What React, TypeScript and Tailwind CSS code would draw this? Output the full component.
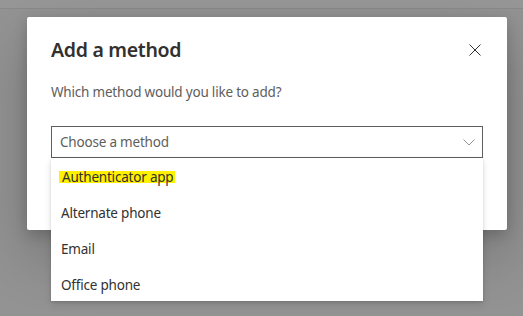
import React from "react";

const METHODS = ["Authenticator app", "Alternate phone", "Email", "Office phone"];

export default function App() {
  return (
    <div
      className="relative h-[316px] w-[523px] overflow-hidden bg-[#939393]"
      style={{ fontFamily: '"Noto Sans", "Open Sans", sans-serif' }}
    >
      {/* page header behind the overlay */}
      <div className="h-[9px] border-b border-[#8a8a8a] bg-[#979797]" />

      {/* Dialog */}
      <div className="ml-[27px] mt-[8px] w-[480px] rounded-[2px] bg-white px-6 pb-[72px] pt-[19px] shadow-[0_25px_58px_rgba(0,0,0,0.22),0_5px_14px_rgba(0,0,0,0.18)]">
        <div className="flex items-center justify-between">
          <h1 className="text-[19.5px] font-semibold leading-[28px] tracking-[-0.3px] text-[#323130]">Add a method</h1>
          <button aria-label="Close" className="mr-[2px] flex h-3 w-3 items-center justify-center">
            <svg width="12" height="12" viewBox="0 0 12 12" fill="none">
              <path d="M0.5 0.5 L11.5 11.5 M11.5 0.5 L0.5 11.5" stroke="#323130" strokeWidth="1" />
            </svg>
          </button>
        </div>

        <p className="mt-[18px] text-[13.5px] leading-5 tracking-[-0.2px] text-[#605e5c]">
          Which method would you like to add?
        </p>

        {/* Select */}
        <div className="relative mt-6">
          <div className="flex h-8 items-center justify-between border border-[#605e5c] pl-2 pr-[7px]">
            <span className="text-[13.5px] tracking-[-0.2px] text-[#605e5c]">Choose a method</span>
            <svg width="12" height="7" viewBox="0 0 12 7" fill="none">
              <path d="M0.5 0.5 L6 6 L11.5 0.5" stroke="#979593" strokeWidth="1" />
            </svg>
          </div>

          {/* Dropdown list */}
          <ul className="absolute left-0 top-full h-[143px] w-full overflow-hidden bg-white pt-px shadow-[0_3px_7px_rgba(0,0,0,0.13),0_1px_2px_rgba(0,0,0,0.11)]">
            {METHODS.map((m, i) => (
              <li
                key={m}
                className="flex h-9 items-center pl-2 text-[13.5px] tracking-[-0.2px] text-[#323130]"
              >
                {i === 0 ? (
                  <span className="inline-block bg-[#fff100] pl-[3px] pr-[2px] leading-[12px]">{m}</span>
                ) : (
                  <span className="pl-[2px]">{m}</span>
                )}
              </li>
            ))}
          </ul>
        </div>
      </div>
    </div>
  );
}
